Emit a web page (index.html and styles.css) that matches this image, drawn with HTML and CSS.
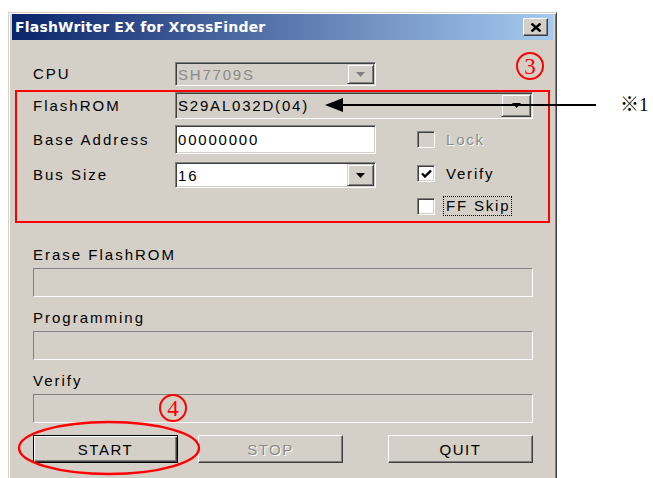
FILE: index.html
```html
<!DOCTYPE html>
<html lang="en">
<head>
<meta charset="utf-8">
<title>FlashWriter EX for XrossFinder</title>
<link rel="stylesheet" href="styles.css">
</head>
<body>
<div class="page">
  <div class="window">
    <div class="titlebar">
      <span class="title">FlashWriter EX for XrossFinder</span>
      <span class="close" aria-label="Close">
        <svg width="12" height="9" viewBox="0 0 12 9"><path d="M1.5 0.5 L10.5 8.5 M10.5 0.5 L1.5 8.5" stroke="#000" stroke-width="2.4" fill="none"/></svg>
      </span>
    </div>

    <div class="dlg">
      <div class="settings">
        <span class="lbl h24">CPU</span>
        <div class="combo combo-cpu is-disabled">
          <span class="field-text">SH7709S</span>
          <span class="combo-btn"><svg width="9" height="5" viewBox="0 0 9 5"><path d="M0 0 H9 L4.5 5 Z" fill="#808080"/></svg></span>
        </div>

        <span class="lbl h27">FlashROM</span>
        <div class="combo combo-rom is-gray">
          <span class="field-text">S29AL032D(04)</span>
          <span class="combo-btn wide"><svg width="9" height="5" viewBox="0 0 9 5"><path d="M0 0 H9 L4.5 5 Z" fill="#000"/></svg></span>
        </div>

        <span class="lbl h29">Base Address</span>
        <div class="edit edit-base">
          <span class="field-text">00000000</span>
        </div>
        <div class="check check-lock is-disabled">
          <span class="box"></span>
          <span class="check-label">Lock</span>
        </div>

        <span class="lbl h26">Bus Size</span>
        <div class="combo combo-bus">
          <span class="field-text">16</span>
          <span class="combo-btn"><svg width="9" height="5" viewBox="0 0 9 5"><path d="M0 0 H9 L4.5 5 Z" fill="#000"/></svg></span>
        </div>
        <div class="check check-verify">
          <span class="box"><svg width="11" height="9" viewBox="0 0 11 9"><path d="M1 4.5 L4 7.5 L10 1.5" stroke="#000" stroke-width="2.4" fill="none"/></svg></span>
          <span class="check-label">Verify</span>
        </div>

        <div class="check check-ff">
          <span class="box"></span>
          <span class="check-label focus">FF Skip</span>
        </div>
      </div>

      <div class="progress">
        <span class="plabel">Erase FlashROM</span>
        <div class="pbar"></div>
        <span class="plabel">Programming</span>
        <div class="pbar"></div>
        <span class="plabel">Verify</span>
        <div class="pbar"></div>
      </div>

      <div class="buttons">
        <button class="btn btn-default">START</button>
        <button class="btn btn-stop" disabled>STOP</button>
        <button class="btn btn-quit">QUIT</button>
      </div>
    </div>
  </div>

  <!-- callouts drawn on top of the dialog -->
  <div class="callout-box"></div>
  <span class="badge badge-3">3</span>
  <svg class="pointer" width="285" height="20" viewBox="0 0 285 20">
    <path d="M5 10 L23 3 L23 17 Z" fill="#000"/>
    <line x1="20" y1="10" x2="276" y2="10" stroke="#000" stroke-width="2.2"/>
  </svg>
  <span class="note">※1</span>
  <span class="badge badge-4">4</span>
  <svg class="ring" width="190" height="62" viewBox="0 0 190 62">
    <ellipse cx="92" cy="30" rx="90" ry="26" fill="none" stroke="#ff0000" stroke-width="2.4"/>
  </svg>
</div>
</body>
</html>
```

FILE: styles.css
```css
* { box-sizing: border-box; }

html, body {
  margin: 0;
  padding: 0;
  background: #fff;
}

.page {
  position: relative;
  width: 653px;
  height: 478px;
  overflow: hidden;
  padding: 12px 0 0 8px;
  font-family: "Liberation Sans", Arial, sans-serif;
  font-size: 15px;
  color: #000;
}

/* classic raised window frame */
.window {
  width: 549px;
  height: 490px;
  background: #d4d0c8;
  border: 1px solid;
  border-color: #d4d0c8 #404040 #404040 #d4d0c8;
  box-shadow: inset 1px 1px #fff, inset -1px -1px #808080;
  padding: 1px 3px 3px 3px;
}

.titlebar {
  height: 26px;
  display: flex;
  align-items: center;
  background: linear-gradient(to right, #0a246a, #a6caf0);
}

.title {
  padding-left: 3px;
  color: #fff;
  font-family: "DejaVu Sans", Verdana, sans-serif;
  font-weight: bold;
  font-size: 14px;
  letter-spacing: 0.2px;
}

.close {
  margin-left: auto;
  margin-right: 5px;
  width: 25px;
  height: 18px;
  display: flex;
  align-items: center;
  justify-content: center;
  background: #d4d0c8;
  border: 1px solid;
  border-color: #fff #404040 #404040 #fff;
  box-shadow: inset -1px -1px #808080;
}

.dlg {
  padding: 22px 20px 0 21px;
}

/* settings block */
.settings {
  display: grid;
  grid-template-columns: 142px 201px 41px 116px;
  grid-template-rows: 30px 33px 37px 31px 26px;
  align-items: start;
}

.lbl {
  grid-column: 1;
  letter-spacing: 2px;
  white-space: nowrap;
}
.h24 { line-height: 24px; }
.h26 { line-height: 26px; }
.h27 { line-height: 27px; }
.h29 { line-height: 29px; }

.combo, .edit {
  display: flex;
  align-items: stretch;
  border: 1px solid;
  border-color: #808080 #fff #fff #808080;
  box-shadow: inset 1px 1px #404040, inset -1px -1px #d4d0c8;
  padding: 1px;
  background: #fff;
}

.field-text {
  flex: 1;
  display: flex;
  align-items: center;
  padding-left: 1px;
  letter-spacing: 1.8px;
  white-space: nowrap;
}

.combo-btn {
  width: 27px;
  display: flex;
  align-items: center;
  justify-content: center;
  background: #d4d0c8;
  border: 1px solid;
  border-color: #d4d0c8 #404040 #404040 #d4d0c8;
  box-shadow: inset 1px 1px #fff, inset -1px -1px #808080;
}
.combo-btn.wide { width: 30px; }

.combo-cpu {
  grid-column: 2;
  height: 24px;
  background: #d4d0c8;
}
.combo-cpu .field-text { color: #8a8a8a; }

.combo-rom {
  grid-column: 2 / 5;
  height: 27px;
  background: #d4d0c8;
}

.edit-base {
  grid-column: 2;
  height: 29px;
}

.combo-bus {
  grid-column: 2;
  height: 26px;
}

/* check boxes */
.check {
  grid-column: 4;
  display: flex;
  align-items: center;
  gap: 11px;
}
.check-lock { height: 29px; }
.check-verify { height: 23px; }
.check-ff { grid-row: 5; height: 26px; }

.box {
  width: 18px;
  height: 17px;
  display: flex;
  align-items: center;
  justify-content: center;
  background: #fff;
  border: 1px solid;
  border-color: #808080 #fff #fff #808080;
  box-shadow: inset 1px 1px #404040, inset -1px -1px #d4d0c8;
}
.check-lock .box { background: #d4d0c8; }

.check-label {
  letter-spacing: 1.8px;
  white-space: nowrap;
}
.check-lock .check-label {
  color: #8a8a8a;
  text-shadow: 1px 1px #fff;
}
.check-label.focus {
  margin-left: -3px;
  padding: 0 1px 0 2px;
  line-height: 18px;
  border: 1px dotted #000;
}

/* progress bars */
.progress {
  margin-top: 27px;
  display: flex;
  flex-direction: column;
}

.plabel {
  height: 18px;
  line-height: 18px;
  margin-bottom: 4px;
  letter-spacing: 2px;
}

.pbar {
  height: 29px;
  margin-bottom: 12px;
  border: 1px solid;
  border-color: #808080 #fff #fff #808080;
  background: #d4d0c8;
}

/* command buttons */
.buttons {
  display: flex;
}

.btn {
  width: 145px;
  height: 28px;
  padding: 0;
  font-family: "Liberation Sans", Arial, sans-serif;
  font-size: 15px;
  letter-spacing: 1.5px;
  color: #000;
  background: #d4d0c8;
  border: 1px solid;
  border-color: #fff #404040 #404040 #fff;
  box-shadow: inset -1px -1px #808080;
}

.btn-default {
  border-color: #000;
  box-shadow: inset 1px 1px #fff, inset -1px -1px #404040, inset -2px -2px #808080;
}

.btn-stop {
  margin-left: 20px;
  color: #8a8a8a;
  text-shadow: 1px 1px #fff;
}

.btn-quit {
  margin-left: auto;
}

/* red callouts and the pointer */
.callout-box {
  position: absolute;
  left: 15px;
  top: 90px;
  width: 535px;
  height: 133px;
  border: 2px solid #ff0000;
}

.badge {
  position: absolute;
  width: 28px;
  height: 28px;
  border: 2px solid #ff0000;
  border-radius: 50%;
  display: flex;
  align-items: center;
  justify-content: center;
  color: #ff0000;
  font-family: "Liberation Serif", "Times New Roman", serif;
  font-size: 23px;
  line-height: 1;
  padding-top: 1px;
}
.badge-3 { left: 516px; top: 52px; }
.badge-4 { left: 159px; top: 394px; }

.pointer {
  position: absolute;
  left: 320px;
  top: 95px;
}

.note {
  position: absolute;
  left: 620px;
  top: 93px;
  font-family: "Liberation Serif", "Noto Sans CJK JP", serif;
  font-size: 19px;
  line-height: 24px;
  white-space: nowrap;
}

.ring {
  position: absolute;
  left: 17px;
  top: 418px;
}
```
